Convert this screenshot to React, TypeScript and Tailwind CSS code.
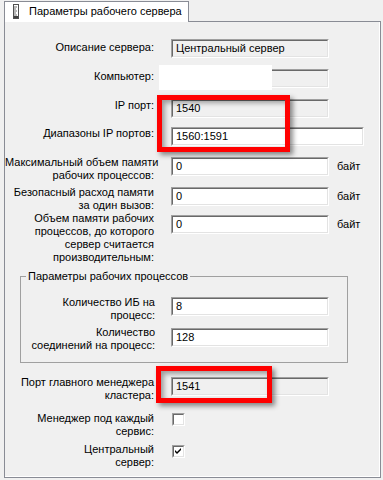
import React from 'react';

// Classic Windows 3D sunken edit box
function Field({ value, readOnly, width = 'w-[158px]' }: { value?: string; readOnly?: boolean; width?: string }) {
    return (
        <div className={`${width} h-[19px] border border-t-[#a0a0a0] border-l-[#a0a0a0] border-r-white border-b-white`}>
            <div className={`h-full flex items-center px-[3px] border border-t-[#696969] border-l-[#696969] border-r-[#e3e3e3] border-b-[#e3e3e3] ${readOnly ? 'bg-[#f0f0f0]' : 'bg-white'}`}>
                <span className="leading-[13px] whitespace-nowrap">{value}</span>
            </div>
        </div>
    );
}

function CheckBox({ checked }: { checked?: boolean }) {
    return (
        <div className="w-[13px] h-[13px] border border-t-[#a0a0a0] border-l-[#a0a0a0] border-r-white border-b-white">
            <div className="w-full h-full bg-white border border-t-[#696969] border-l-[#696969] border-r-[#e3e3e3] border-b-[#e3e3e3] flex items-center justify-center">
                {checked && (
                    <svg width="7" height="7" viewBox="0 0 7 7">
                        <path d="M0 2 L2 4 L6 0 L6 2 L2 6 L0 4 Z" fill="#000" />
                    </svg>
                )}
            </div>
        </div>
    );
}

function Label({ lines, cls = '', width = 'w-[149px]' }: { lines: string[]; cls?: string; width?: string }) {
    return (
        <div className={`${width} shrink-0 text-right leading-[13px] whitespace-nowrap ${cls}`}>
            {lines.map((l, i) => (
                <div key={i}>{l}</div>
            ))}
        </div>
    );
}

function TabIcon() {
    return (
        <svg width="6" height="15" viewBox="0 0 6 15" className="shrink-0">
            <rect x="0.5" y="0.5" width="5" height="14" fill="#fff" stroke="#505050" />
            <path d="M1 3h3M1 5h2M1 7h3M1 9h2M1 11h3" stroke="#707070" strokeWidth="1" />
            <rect x="1" y="12" width="4" height="2" fill="#404040" />
        </svg>
    );
}

export default function App() {
    return (
        <div className="relative w-[383px] h-[480px] overflow-hidden bg-[#f0f0f0] text-[11px] text-black font-['Liberation_Sans',Arial,sans-serif]">
            {/* tab header */}
            <div className="relative z-10 mt-[1px] ml-[4px] w-[185px] h-[21px] -mb-px flex items-center bg-white border border-b-0 border-[#898c95]">
                <div className="ml-[8px] mt-[-2px]">
                    <TabIcon />
                </div>
                <span className="ml-[10px] leading-[13px] mt-[-2px] whitespace-nowrap">Параметры рабочего сервера</span>
            </div>

            {/* tab page */}
            <div className="ml-[4px] w-[377px] h-[457px] border border-[#898c95] bg-[#f0f0f0]">
                <div className="h-full border-r border-b border-white pt-[17px]">
                    <div className="flex h-[30px]">
                        <Label lines={['Описание сервера:']} cls="mt-[2px]" />
                        <div className="ml-[17px]"><Field value="Центральный сервер" readOnly /></div>
                    </div>
                    <div className="flex h-[30px]">
                        <Label lines={['Компьютер:']} cls="mt-[1px]" />
                        <div className="ml-[17px]"><Field readOnly /></div>
                    </div>
                    <div className="flex h-[28px]">
                        <Label lines={['IP порт:']} />
                        <div className="ml-[17px]"><Field value="1540" readOnly /></div>
                    </div>
                    <div className="flex h-[30px]">
                        <Label lines={['Диапазоны IP портов:']} />
                        <div className="ml-[17px]"><Field value="1560:1591" width="w-[193px]" /></div>
                    </div>
                    <div className="flex h-[30px]">
                        <Label lines={['Максимальный объем памяти', 'рабочих процессов:']} cls="-mt-[1px]" />
                        <div className="ml-[17px]"><Field value="0" /></div>
                        <div className="ml-[8px] h-[19px] flex items-center">байт</div>
                    </div>
                    <div className="flex h-[28px]">
                        <Label lines={['Безопасный расход памяти', 'за один вызов:']} cls="-mt-[1px]" />
                        <div className="ml-[17px]"><Field value="0" /></div>
                        <div className="ml-[8px] h-[19px] flex items-center">байт</div>
                    </div>
                    <div className="flex h-[55px]">
                        <Label lines={['Объем памяти рабочих', 'процессов, до которого', 'сервер считается', 'производительным:']} cls="-mt-[3px]" />
                        <div className="ml-[17px]"><Field value="0" /></div>
                        <div className="ml-[8px] h-[19px] flex items-center">байт</div>
                    </div>

                    {/* worker process group */}
                    <fieldset className="ml-[15px] w-[328px] border border-[#a0a0a0] pb-[15px]">
                        <legend className="ml-[5px] px-[2px] leading-[13px]">Параметры рабочих процессов</legend>
                        <div className="flex h-[31px] mt-[14px]">
                            <Label lines={['Количество ИБ на', 'процесс:']} width="w-[134px]" cls="-mt-[1px]" />
                            <div className="ml-[16px]"><Field value="8" /></div>
                        </div>
                        <div className="flex h-[19px]">
                            <Label lines={['Количество', 'соединений на процесс:']} width="w-[134px]" cls="-mt-[2px]" />
                            <div className="ml-[16px]"><Field value="128" /></div>
                        </div>
                    </fieldset>

                    <div className="flex h-[36px] mt-[14px]">
                        <Label lines={['Порт главного менеджера', 'кластера:']} cls="-mt-[1px]" />
                        <div className="ml-[17px]"><Field value="1541" readOnly /></div>
                    </div>
                    <div className="flex h-[32px]">
                        <Label lines={['Менеджер под каждый', 'сервис:']} cls="-mt-[1px]" />
                        <div className="ml-[18px]"><CheckBox /></div>
                    </div>
                    <div className="flex h-[28px]">
                        <Label lines={['Центральный', 'сервер:']} cls="-mt-[2px]" />
                        <div className="ml-[18px]"><CheckBox checked /></div>
                    </div>
                </div>
            </div>

            {/* redaction + annotation overlays */}
            <div className="absolute left-[159px] top-[65px] w-[113px] h-[25px] bg-white" />
            <div className="absolute left-[157px] top-[95px] w-[133px] h-[57px] border-[5px] border-[#f00] shadow-[3px_3px_5px_rgba(0,0,0,0.45),inset_3px_3px_5px_rgba(0,0,0,0.35)]" />
            <div className="absolute left-[156px] top-[366px] w-[116px] h-[37px] border-[5px] border-[#f00] shadow-[3px_3px_5px_rgba(0,0,0,0.45),inset_3px_3px_5px_rgba(0,0,0,0.35)]" />
        </div>
    );
}
